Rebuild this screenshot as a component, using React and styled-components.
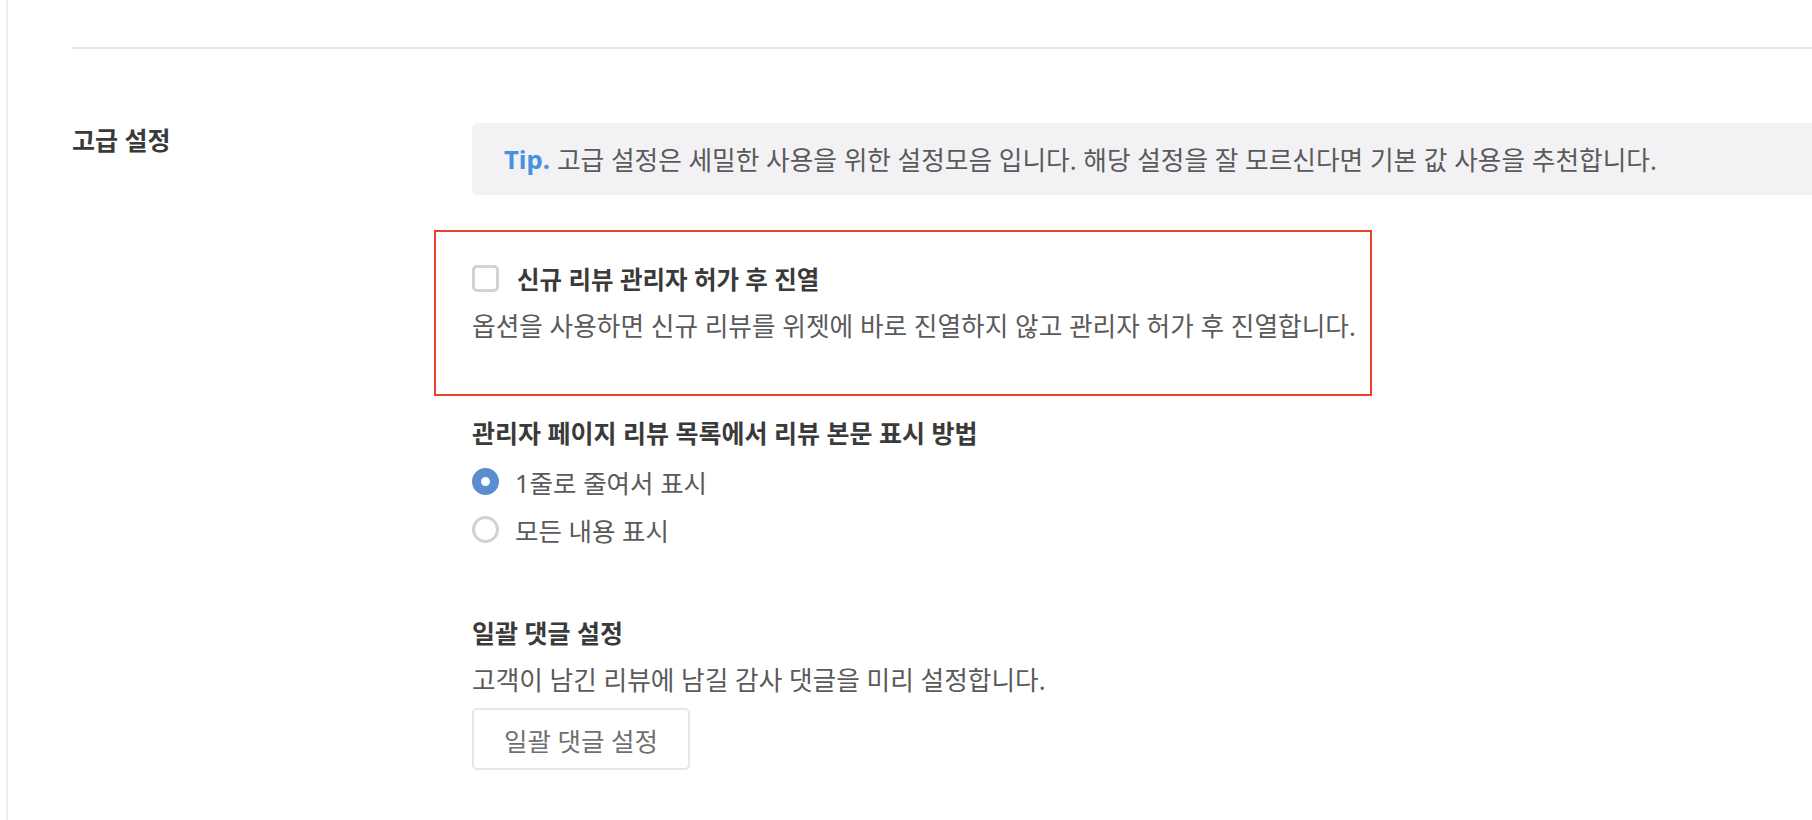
import styled, { createGlobalStyle } from 'styled-components';

const GlobalStyle = createGlobalStyle`
	html, body {
		margin: 0;
		padding: 0;
		background: #fff;
		overflow: hidden;
	}
	body {
		font-family: 'Noto Sans', 'Noto Sans CJK KR', sans-serif;
		color: #555;
	}
`;

const Page = styled.div`
	margin-left: 6px;
	border-left: 2px solid #ececec;
	min-height: 820px;
	padding: 47px 0 0 64px;
	box-sizing: border-box;
`;

const Divider = styled.hr`
	margin: 0;
	border: 0;
	border-top: 2px solid #e8e8e8;
`;

const Section = styled.section`
	display: grid;
	grid-template-columns: 400px 1fr;
	margin-top: 74px;
`;

const SectionTitle = styled.h2`
	margin: 0;
	font-size: 25px;
	line-height: 34px;
	font-weight: 700;
	color: #3a3a3a;
`;

const Content = styled.div`
	display: flex;
	flex-direction: column;
	align-items: flex-start;
`;

const Tip = styled.div`
	align-self: stretch;
	margin-right: -20px;
	height: 72px;
	display: flex;
	align-items: center;
	padding-left: 32px;
	background: #f2f2f4;
	border-radius: 6px;
	font-size: 25.7px;
	color: #5a5a5a;
	white-space: nowrap;
	strong {
		color: #4a8fe0;
		font-weight: 700;
		margin-right: 7px;
	}
`;

const OptionBox = styled.div`
	margin: 35px 0 0 -38px;
	width: 938px;
	box-sizing: border-box;
	border: 2px solid #e8432a;
	padding: 32px 36px 50px;
`;

const CheckRow = styled.label`
	display: flex;
	align-items: center;
	gap: 18px;
	height: 28px;
`;

const CheckBox = styled.span`
	width: 27px;
	height: 27px;
	box-sizing: border-box;
	border: 3px solid #d2d2d2;
	border-radius: 5px;
	background: #fff;
`;

const Label = styled.span`
	font-size: 24.5px;
	font-weight: 700;
	color: #3a3a3a;
`;

const Desc = styled.p`
	margin: ${(p) => p.$top || 0}px 0 0;
	font-size: 25.7px;
	line-height: 34px;
	color: #5a5a5a;
	white-space: nowrap;
`;

const SubTitle = styled.h3`
	margin: ${(p) => p.$top}px 0 0;
	font-size: 25px;
	line-height: 34px;
	font-weight: 700;
	color: #3a3a3a;
`;

const RadioList = styled.div`
	margin-top: 7px;
	display: flex;
	flex-direction: column;
`;

const RadioRow = styled.label`
	display: flex;
	align-items: center;
	gap: 16px;
	height: 48px;
	font-size: 25.5px;
	color: #5a5a5a;
`;

const RadioDot = styled.span`
	width: 27px;
	height: 27px;
	box-sizing: border-box;
	border-radius: 50%;
	border: ${(p) => (p.$checked ? '9px solid #5b8ed0' : '3px solid #d2d2d2')};
	background: #fff;
`;

const Button = styled.button`
	margin-top: 10px;
	width: 218px;
	height: 62px;
	border: 2px solid #e6e6e6;
	border-radius: 5px;
	background: #fff;
	font-family: inherit;
	font-size: 25.5px;
	color: #707070;
	cursor: pointer;
`;

export default function App() {
	return (
		<>
			<GlobalStyle />
			<Page>
				<Divider />
				<Section>
					<SectionTitle>고급 설정</SectionTitle>
					<Content>
						<Tip>
							<strong>Tip.</strong>
							고급 설정은 세밀한 사용을 위한 설정모음 입니다. 해당 설정을 잘 모르신다면 기본 값 사용을 추천합니다.
						</Tip>
						<OptionBox>
							<CheckRow>
								<CheckBox />
								<Label>신규 리뷰 관리자 허가 후 진열</Label>
							</CheckRow>
							<Desc $top={18}>
								옵션을 사용하면 신규 리뷰를 위젯에 바로 진열하지 않고 관리자 허가 후 진열합니다.
							</Desc>
						</OptionBox>
						<SubTitle $top={20}>관리자 페이지 리뷰 목록에서 리뷰 본문 표시 방법</SubTitle>
						<RadioList>
							<RadioRow>
								<RadioDot $checked />
								1줄로 줄여서 표시
							</RadioRow>
							<RadioRow>
								<RadioDot />
								모든 내용 표시
							</RadioRow>
						</RadioList>
						<SubTitle $top={63}>일괄 댓글 설정</SubTitle>
						<Desc $top={14}>고객이 남긴 리뷰에 남길 감사 댓글을 미리 설정합니다.</Desc>
						<Button>일괄 댓글 설정</Button>
					</Content>
				</Section>
			</Page>
		</>
	);
}
